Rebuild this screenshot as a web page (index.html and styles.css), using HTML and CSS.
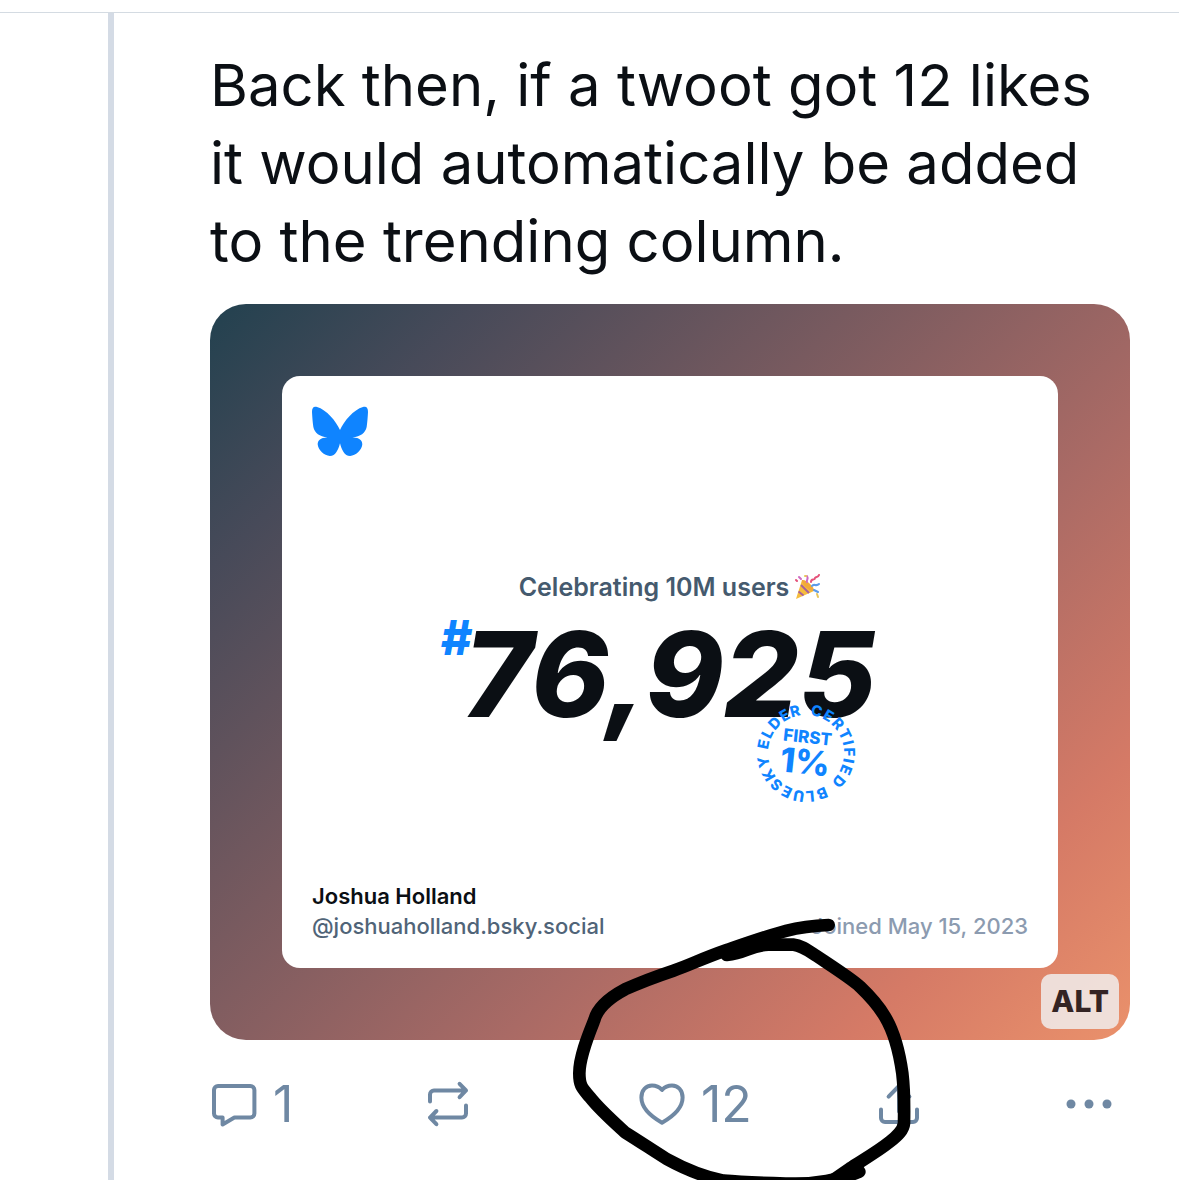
FILE: index.html
```html
<!DOCTYPE html>
<html lang="en">
<head>
<meta charset="utf-8">
<meta name="viewport" content="width=device-width, initial-scale=1">
<title>Post</title>
<link rel="stylesheet" href="styles.css">
</head>
<body>
<article class="post">
  <div class="thread-line"></div>
  <div class="content">
    <p class="post-text">Back then, if a twoot got 12 likes it would automatically be added to the trending column.</p>

    <div class="media">
      <section class="card">
        <svg class="logo" viewBox="0 0 166 148" aria-label="Bluesky"><path fill="#0f84ff" d="M83 71C72 46 42 10 15 3C4 0 0 6 0 18C1 35 2 50 4 62C8 80 22 90 46 93C24 93 16 103 17 115C19 131 36 147 53 148C70 148 78 129 83 110C88 129 96 148 113 148C130 147 147 131 149 115C150 103 142 93 120 93C144 90 158 80 162 62C164 50 165 35 166 18C166 6 162 0 151 3C124 10 94 46 83 71z"/></svg>
        <div class="milestone">
          <p class="celebrate">Celebrating 10M users
            <svg class="popper" viewBox="0 0 26 26" aria-label="party popper">
              <path fill="#f6bd3c" d="M7 6l12 11L1 25z"/>
              <path stroke="#a8619b" stroke-width="2" d="M6 11l8 8M3.500 17.500l5 4"/>
              <path fill="#f2a93a" d="M7 6c4-1 13 7 12 11-4 1-13-7-12-11z"/>
              <g fill="none" stroke-width="2" stroke-linecap="round">
                <path stroke="#d06bc2" d="M12 8c-1-2 2-3 0-6M4 3l2 2"/>
                <path stroke="#e5537a" d="M16 8c0-4 4-1 4-4 1-2 3 0 4-3M1 6l1 1"/>
                <path stroke="#5b9bea" d="M17 12c2-3 4 1 7-2M19 16l4 2"/>
                <path stroke="#e8c65a" d="M22 20l1 3M10 2h1"/>
              </g>
            </svg>
          </p>
          <div class="number-row">
            <span class="hash">#</span><span class="number">76,925</span>
            <svg class="stamp" viewBox="-60 -60 120 120">
              <path id="ring" fill="none" transform="rotate(7)" d="M0-38A38 38 0 0 1 0 38A38 38 0 0 1 0-38"/>
              <text class="stamp-ring"><textPath href="#ring"><tspan x="5 16 27 38 46 54 62 70 82 91 100 111 121 132 143 154 166 174 182 192 203 214 224">CERTIFIED BLUESKY ELDER</tspan></textPath></text>
              <g transform="rotate(6)">
                <text class="stamp-first" x="0" y="-10">FIRST</text>
                <text class="stamp-percent" x="0" y="21">1%</text>
              </g>
            </svg>
          </div>
        </div>
        <footer class="card-footer">
          <div>
            <div class="name">Joshua Holland</div>
            <div class="handle">@joshuaholland.bsky.social</div>
          </div>
          <div class="joined">Joined May 15, 2023</div>
        </footer>
      </section>
      <button class="alt" type="button">ALT</button>
    </div>

    <div class="actions">
      <button class="action" type="button" aria-label="Reply, 1 reply">
        <svg class="icon" viewBox="0 0 24 24"><path d="M4 3h16.200a2 2 0 0 1 2 2v11.800a2 2 0 0 1-2 2h-8L6.300 22.200v-3.400H4a2 2 0 0 1-2-2V5a2 2 0 0 1 2-2z"/></svg>
        <span>1</span>
      </button>
      <button class="action" type="button" aria-label="Repost">
        <svg class="icon" viewBox="0 0 24 24"><path d="M3 10.800V7.200a2 2 0 0 1 2-2h16M17.800 1.900L21 5.200l-3.200 3.400M21 12.800v4a2 2 0 0 1-2 2H3M6.200 15.500L3 18.800l3.200 3.300"/></svg>
      </button>
      <button class="action" type="button" aria-label="Like, 12 likes">
        <svg class="icon" viewBox="0 0 24 24"><path d="M12 21.400C5.500 17.700 1.700 13.200 1.700 8.800 1.700 5 4 2.800 7 2.800c2 0 3.500.6 5 2.200 1.500-1.600 3-2.200 5-2.200 3 0 5.300 2.200 5.300 6 0 4.400-3.800 8.900-10.300 12.600z"/></svg>
        <span>12</span>
      </button>
      <button class="action" type="button" aria-label="Share">
        <svg class="icon" viewBox="0 0 24 24"><path d="M3 14.700V19a2 2 0 0 0 2 2h14a2 2 0 0 0 2-2v-4.300M12 15.800V3M6.800 8.300L12 3l5.200 5.300"/></svg>
      </button>
      <button class="action" type="button" aria-label="More options">
        <svg class="icon dots" viewBox="0 0 24 24"><circle cx="3" cy="12" r="2.250"/><circle cx="12" cy="12" r="2.250"/><circle cx="21" cy="12" r="2.250"/></svg>
      </button>
    </div>
  </div>

  <svg class="scribble" viewBox="0 0 1110 840" aria-hidden="true">
    <path d="M806 75C700 80 660 95 500 150C420 178 390 195 340 212C280 232 230 252 195 268C150 292 112 325 103 360C85 405 58 470 58 520C58 560 68 565 90 592C120 630 160 665 195 697C240 725 280 752 320 777C380 810 430 830 490 842C560 848 620 849 700 851C760 852 840 840 898 815"/>
    <path d="M500 165C560 158 570 136 625 134L700 134C725 136 745 152 770 168C830 208 880 240 900 260C940 298 960 325 975 350C1005 400 1020 470 1027 520C1033 570 1033 620 1032 670C1030 690 1015 705 990 725C950 757 900 785 870 805L820 840"/>
    <path d="M520 145L600 125L640 115"/>
  </svg>
</article>
</body>
</html>
```
FILE: styles.css
```css
* {
  box-sizing: border-box;
}

body {
  margin: 0;
  padding-top: 12px;
  background: #fff;
  color: #0b0f14;
  font-family: Inter, "Liberation Sans", sans-serif;
}

p {
  margin: 0;
}

button {
  padding: 0;
  border: 0;
  background: none;
  font-family: inherit;
  cursor: pointer;
}

.post {
  position: relative;
  display: flex;
  gap: 96px;
  min-height: calc(100vh - 12px);
  padding: 0 49px 0 108px;
  border-top: 1px solid #d4dbe2;
}

.thread-line {
  flex: none;
  width: 6px;
  background: #d4dbe5;
}

.content {
  flex: 1;
  min-width: 0;
  padding: 33px 0 48px;
}

.post-text {
  font-size: 58px;
  line-height: 78px;
}

.media {
  position: relative;
  display: flex;
  aspect-ratio: 5 / 4;
  margin-top: 24px;
  padding: 72px;
  border-radius: 36px;
  background: linear-gradient(135deg, #22414f, #474a59 16%, #a96a65 62%, #d57a66 83%, #ea916b);
}

.card {
  flex: 1;
  display: flex;
  flex-direction: column;
  justify-content: space-between;
  padding: 30px 30px 27px;
  border-radius: 18px;
  background: #fff;
}

.logo {
  width: 56px;
  height: 50px;
}

.milestone {
  display: flex;
  flex-direction: column;
  align-items: center;
  padding-bottom: 19px;
}

.celebrate {
  display: flex;
  align-items: center;
  gap: 6px;
  color: #455a6e;
  font-size: 25px;
  font-weight: 600;
  line-height: 30px;
}

.popper {
  width: 26px;
  height: 26px;
}

.number-row {
  position: relative;
  display: flex;
  align-items: flex-start;
  padding-right: 24px;
  font-style: italic;
  font-weight: 800;
}

.hash {
  color: #0f84ff;
  font-size: 48px;
  line-height: 72px;
}

.number {
  margin-left: -8px;
  font-size: 118px;
  line-height: 144px;
}

.stamp {
  position: absolute;
  right: 34px;
  bottom: -67px;
  width: 120px;
  height: 120px;
  fill: #0f84ff;
  font-style: normal;
  text-anchor: middle;
}

.stamp-ring {
  font-size: 15px;
  font-weight: 800;
}

.stamp-first {
  font-size: 17px;
  font-weight: 800;
}

.stamp-percent {
  font-size: 34px;
  font-weight: 800;
}

.card-footer {
  display: flex;
  align-items: flex-end;
  justify-content: space-between;
  font-size: 22px;
  font-weight: 500;
  line-height: 30px;
}

.name {
  font-weight: 600;
}

.handle {
  color: #506478;
}

.joined {
  color: #8c9bb0;
}

.alt {
  position: absolute;
  right: 11px;
  bottom: 11px;
  padding: 9px 10px;
  border-radius: 10px;
  background: rgba(240, 232, 230, 0.9);
  color: #342424;
  font-size: 30px;
  font-weight: 800;
  line-height: 37px;
}

.actions {
  display: grid;
  grid-template-columns: 214fr 214fr 237fr 190fr 65fr;
  margin-top: 34px;
}

.action {
  display: flex;
  align-items: center;
  gap: 15px;
  color: #6f88a3;
  font-size: 50px;
  line-height: 60px;
}

.icon {
  flex: none;
  width: 48px;
  height: 48px;
  fill: none;
  stroke: currentColor;
  stroke-width: 2;
  stroke-linecap: round;
  stroke-linejoin: round;
}

.dots {
  fill: currentColor;
  stroke: none;
}

.scribble {
  position: absolute;
  left: 560px;
  top: 887px;
  width: 370px;
  height: 280px;
  fill: none;
  stroke: #000;
  stroke-width: 38;
  stroke-linecap: round;
  stroke-linejoin: round;
  pointer-events: none;
}
```
